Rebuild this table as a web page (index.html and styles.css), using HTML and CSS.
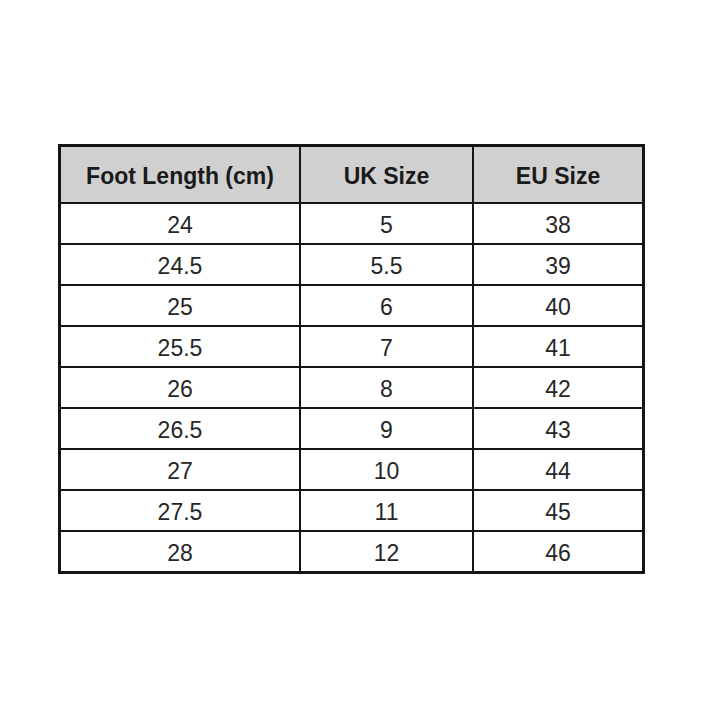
FILE: index.html
```html
<!DOCTYPE html>
<html>
<head>
<meta charset="utf-8">
<link rel="stylesheet" href="styles.css">
</head>
<body>
<div class="page">
  <div class="size-table">
    <div class="cell head">Foot Length (cm)</div>
    <div class="cell head">UK Size</div>
    <div class="cell head">EU Size</div>

    <div class="cell">24</div><div class="cell">5</div><div class="cell">38</div>
    <div class="cell">24.5</div><div class="cell">5.5</div><div class="cell">39</div>
    <div class="cell">25</div><div class="cell">6</div><div class="cell">40</div>
    <div class="cell">25.5</div><div class="cell">7</div><div class="cell">41</div>
    <div class="cell">26</div><div class="cell">8</div><div class="cell">42</div>
    <div class="cell">26.5</div><div class="cell">9</div><div class="cell">43</div>
    <div class="cell">27</div><div class="cell">10</div><div class="cell">44</div>
    <div class="cell">27.5</div><div class="cell">11</div><div class="cell">45</div>
    <div class="cell">28</div><div class="cell">12</div><div class="cell">46</div>
  </div>
</div>
</body>
</html>
```
FILE: styles.css
```css
html, body {
  margin: 0;
  padding: 0;
  background: #ffffff;
}

.page {
  padding: 144px 0 0 58px;
}

.size-table {
  display: grid;
  grid-template-columns: 238px 171px 168px;
  grid-template-rows: 55px repeat(9, 39px);
  gap: 2px;
  padding: 3px;
  width: max-content;
  background: #151515;
  font-family: "Liberation Sans", Arial, sans-serif;
  color: #262626;
}

.cell {
  background: #ffffff;
  display: flex;
  align-items: center;
  justify-content: center;
  padding-top: 3px;
  font-size: 23px;
  line-height: 1;
}

.cell.head {
  background: #d0d0d0;
  font-weight: bold;
  color: #1a1a1a;
}
```
